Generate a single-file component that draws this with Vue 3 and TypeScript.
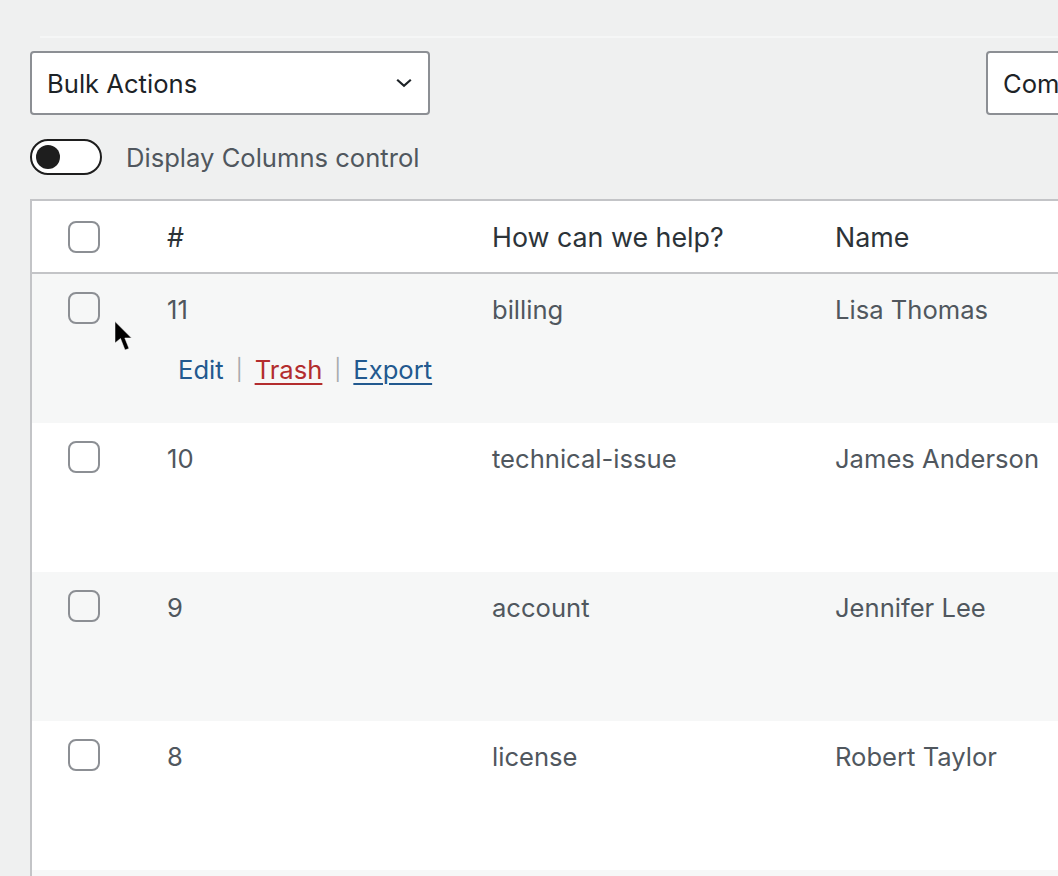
<script setup lang="ts">
interface Entry {
    id: number;
    topic: string;
    name: string;
    actions?: boolean;
}

const entries: Entry[] = [
    { id: 11, topic: "billing", name: "Lisa Thomas", actions: true },
    { id: 10, topic: "technical-issue", name: "James Anderson" },
    { id: 9, topic: "account", name: "Jennifer Lee" },
    { id: 8, topic: "license", name: "Robert Taylor" }
];
</script>

<template>
    <div class="page">
        <div class="top-rule" />

        <div class="toolbar">
            <div class="select bulk">
                <span>Bulk Actions</span>
                <svg class="chevron" width="16" height="10" viewBox="0 0 16 10" aria-hidden="true">
                    <path d="M1.2 1.8 8 7.8l6.8-6" fill="none" stroke="#1d2327" stroke-width="2.2" />
                </svg>
            </div>
            <div class="select compare"><span>Compare</span></div>
        </div>

        <div class="columns-control">
            <span class="toggle"><span class="knob" /></span>
            <span class="toggle-label">Display Columns control</span>
        </div>

        <div class="table">
            <div class="row head">
                <div class="check-cell"><span class="checkbox" /></div>
                <div>#</div>
                <div>How can we help?</div>
                <div>Name</div>
            </div>

            <div v-for="(entry, i) in entries" :key="entry.id" class="row entry" :class="{ odd: i % 2 === 0 }">
                <div class="check-cell"><span class="checkbox" /></div>
                <div class="id-cell">
                    {{ entry.id }}
                    <div v-if="entry.actions" class="actions">
                        <a class="blue plain">Edit</a>
                        <i>|</i>
                        <a class="red">Trash</a>
                        <i>|</i>
                        <a class="blue">Export</a>
                    </div>
                </div>
                <div>{{ entry.topic }}</div>
                <div>{{ entry.name }}</div>
            </div>

            <!-- next row, only its top edge is in view -->
            <div class="row entry odd" />

            <svg class="cursor" width="22" height="34" viewBox="0 0 22 34" aria-hidden="true">
                <path d="M1 1.5V23l5.5-4.5L11 30l4-1.5L10.8 18h6.7z" fill="#000" stroke="#fff" stroke-width="0.5" />
            </svg>
        </div>
    </div>
</template>

<style>
html,
body {
    margin: 0;
    background: #f0f1f1;
    overflow: hidden;
}
</style>

<style scoped>
.page {
    position: relative;
    width: 1058px;
    height: 876px;
    overflow: hidden;
    box-sizing: border-box;
    padding: 36px 0 0 30px;
    background: #eff0f0;
    font-family: Inter, "Noto Sans", "Liberation Sans", sans-serif;
    font-size: 25.6px;
    color: #50575e;
}

.top-rule {
    height: 2px;
    margin-left: 10px;
    background: #f5f6f6;
}

.toolbar {
    display: flex;
    gap: 556px;
    margin-top: 13px;
}

.select {
    display: flex;
    flex: none;
    align-items: center;
    justify-content: space-between;
    box-sizing: border-box;
    width: 400px;
    height: 64px;
    padding: 0 15px;
    background: #fff;
    border: 2px solid #8c8f94;
    border-radius: 4px;
    color: #1d2327;
}

.chevron {
    margin-right: 1px;
}

.columns-control {
    display: flex;
    align-items: center;
    gap: 24px;
    margin-top: 24px;
}

.toggle {
    display: block;
    box-sizing: border-box;
    width: 72px;
    height: 36px;
    padding: 4px;
    background: #fff;
    border: 2px solid #1e1e1e;
    border-radius: 18px;
}

.knob {
    display: block;
    width: 24px;
    height: 24px;
    background: #1e1e1e;
    border-radius: 50%;
}

.table {
    position: relative;
    box-sizing: border-box;
    width: 1200px;
    margin-top: 24px;
    background: #fff;
    border: 2px solid #c3c4c7;
    border-width: 2px 0 0 2px;
}

.row {
    display: grid;
    grid-template-columns: 135px 325px 343px 1fr;
    white-space: nowrap;
}

.head {
    height: 71px;
    align-items: center;
    border-bottom: 2px solid #c3c4c7;
    font-size: 26.8px;
    color: #2c3338;
}

.entry {
    height: 149px;
    padding-top: 20px;
    box-sizing: border-box;
    line-height: 32px;
    background: #fff;
}

.entry.odd {
    background: #f6f7f7;
}

.check-cell {
    display: flex;
    padding-left: 36px;
}

.entry .check-cell {
    margin-top: -2px;
}

.checkbox {
    display: block;
    box-sizing: border-box;
    width: 32px;
    height: 32px;
    background: #fff;
    border: 2px solid #8c8f94;
    border-radius: 8px;
}

.entry .checkbox {
    background: transparent;
}

.actions {
    display: flex;
    gap: 12px;
    margin: 28px 0 0 11px;
}

.actions i {
    font-size: 21px;
    font-style: normal;
    color: #a7aaad;
}

.actions a {
    text-decoration: underline;
    text-decoration-thickness: 2px;
    text-underline-offset: 4px;
}

.actions a.plain {
    text-decoration: none;
}

.blue {
    color: #22598f;
}

.red {
    color: #b32d2e;
}

.cursor {
    position: absolute;
    left: 82px;
    top: 119px;
}
</style>
